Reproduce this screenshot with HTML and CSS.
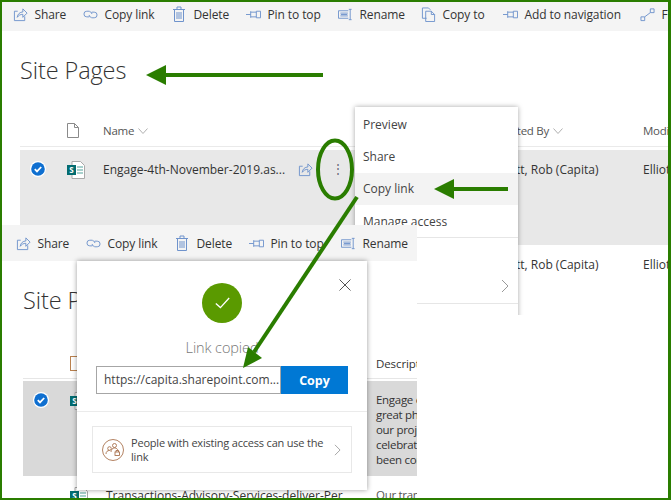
FILE: index.html
```html
<!DOCTYPE html>
<html lang="en">
<head>
<meta charset="utf-8">
<title>Site Pages - Copy link</title>
<link rel="stylesheet" href="styles.css">
</head>
<body>
<svg class="defs" width="0" height="0" aria-hidden="true">
  <symbol id="i-share" viewBox="0 0 16 16"><path d="M5 4.5H1.5v10h11V10M4.5 11c.3-3.4 3-5.700 6-5.700V2L15 6.500 10.500 11V7.800c-2.500 0-4.500 1-6 3.200z"/></symbol>
  <symbol id="i-link" viewBox="0 0 16 16"><path d="M7 4.500H4a3 3 0 0 0 0 6h2.500M7 5a2.500 2.500 0 0 1 2.500 2.500M9 11.500h3a3 3 0 0 0 0-6H9.500M9 11A2.500 2.500 0 0 1 6.500 8.500"/></symbol>
  <symbol id="i-trash" viewBox="0 0 12 16"><path d="M1.500 3.500v12h9v-12M0 3.500h12M4 3.500V1h4v2.500M4 6v7M6 6v7M8 6v7"/></symbol>
  <symbol id="i-pin" viewBox="0 0 16 16"><path d="M0 8h5M5 4.500v7M5 5.500h6M5 10.500h6M11 4.500v7M11 4.500h4.500v7H11"/></symbol>
  <symbol id="i-rename" viewBox="0 0 16 16"><path d="M11 4H.5v8H11M3 8h7M2.500 6.500h8M2.500 9.500h8M13 2.500v11M11.500 2.500h3M11.500 13.500h3"/></symbol>
  <symbol id="i-copy" viewBox="0 0 16 16"><path d="M6 12H1.500V1H8l2 2M5 4.500h6l3.500 3.500v7.500H5zM11 4.500V8h3.500"/></symbol>
  <symbol id="i-flow" viewBox="0 0 16 16"><path d="M1 10.500h4v4H1zM11 2h4v4h-4zM5 10.500L11 6"/></symbol>
  <symbol id="i-check" viewBox="0 0 16 16"><circle class="check-ring" cx="8" cy="8" r="8"/><circle class="check-disc" cx="8" cy="8" r="6.800"/><path class="check-tick" d="M4.800 8.200l2.200 2.200 4.200-4.400"/></symbol>
  <symbol id="i-page" viewBox="0 0 18 18"><path class="page-sheet" d="M5 .5h8.500l4 4v13H5z"/><path class="page-line" d="M10 6h6M10 9h6M10 12h6"/><rect class="page-tile" x="0" y="4" width="9" height="10"/><text class="page-s" x="4.500" y="12">S</text></symbol>
  <symbol id="i-file" viewBox="0 0 12 15"><path d="M.5.5h7l4 4v10H.5zM7.500.5v4h4"/></symbol>
  <symbol id="i-chevron" viewBox="0 0 10 6"><path d="M.5.500L5 5.500 9.500.500"/></symbol>
</svg>

<main class="canvas">
  <section class="shot shot-a">
    <div class="toolbar">
      <span class="tool"><svg class="ico"><use href="#i-share"/></svg>Share</span>
      <span class="tool"><svg class="ico"><use href="#i-link"/></svg>Copy link</span>
      <span class="tool"><svg class="ico ico-narrow"><use href="#i-trash"/></svg>Delete</span>
      <span class="tool"><svg class="ico"><use href="#i-pin"/></svg>Pin to top</span>
      <span class="tool"><svg class="ico"><use href="#i-rename"/></svg>Rename</span>
      <span class="tool"><svg class="ico"><use href="#i-copy"/></svg>Copy to</span>
      <span class="tool"><svg class="ico"><use href="#i-pin"/></svg>Add to navigation</span>
      <span class="tool"><svg class="ico"><use href="#i-flow"/></svg>Flow</span>
    </div>
    <h1 class="title">Site Pages</h1>
    <div class="grid-a head">
      <span></span>
      <svg class="file"><use href="#i-file"/></svg>
      <span class="col">Name <svg class="chev"><use href="#i-chevron"/></svg></span>
      <span class="col">Created By <svg class="chev"><use href="#i-chevron"/></svg></span>
      <span class="col">Modified By</span>
    </div>
    <div class="grid-a row row-selected">
      <svg class="check"><use href="#i-check"/></svg>
      <svg class="page"><use href="#i-page"/></svg>
      <span class="name-cell"><span class="name">Engage-4th-November-2019.as...</span><svg class="ico row-share"><use href="#i-share"/></svg><span class="dots">⋮</span></span>
      <span>Elliott, Rob (Capita)</span>
      <span>Elliott, Rob (Capita)</span>
    </div>
    <div class="grid-a row row-plain">
      <span></span><span></span><span></span>
      <span>Elliott, Rob (Capita)</span>
      <span>Elliott, Rob (Capita)</span>
    </div>
    <div class="menu">
      <div class="menu-item">Preview</div>
      <div class="menu-item">Share</div>
      <div class="menu-item menu-hover">Copy link</div>
      <div class="menu-item">Manage access</div>
      <div class="menu-gap"></div>
      <div class="menu-sub"><svg class="menu-chev" viewBox="0 0 8 14"><path d="M1 1l6 6-6 6"/></svg></div>
    </div>
  </section>

  <section class="shot shot-b">
    <div class="toolbar">
      <span class="tool"><svg class="ico"><use href="#i-share"/></svg>Share</span>
      <span class="tool"><svg class="ico"><use href="#i-link"/></svg>Copy link</span>
      <span class="tool"><svg class="ico ico-narrow"><use href="#i-trash"/></svg>Delete</span>
      <span class="tool"><svg class="ico"><use href="#i-pin"/></svg>Pin to top</span>
      <span class="tool"><svg class="ico"><use href="#i-rename"/></svg>Rename</span>
    </div>
    <h2 class="title title-b">Site Pages</h2>
    <div class="grid-b head-b">
      <span></span>
      <span class="file-b"></span>
      <span></span>
      <span class="col">Description</span>
    </div>
    <div class="grid-b row-b">
      <svg class="check"><use href="#i-check"/></svg>
      <svg class="page"><use href="#i-page"/></svg>
      <span></span>
      <span class="desc">Engage on our<br>great photos of<br>our projects to<br>celebrate what has<br>been completed</span>
    </div>
    <div class="grid-b row-b2">
      <span></span>
      <svg class="page"><use href="#i-page"/></svg>
      <span class="next-name">Transactions-Advisory-Services-deliver-Per</span>
      <span class="next-desc">Our transactions</span>
    </div>
  </section>

  <section class="dialog">
    <svg class="close" viewBox="0 0 12 12"><path d="M.5.500l11 11M11.500.500l-11 11"/></svg>
    <div class="ok"><svg class="ok-tick" viewBox="0 0 18 14"><path d="M1 7.500l5.500 5L17 1"/></svg></div>
    <p class="copied">Link copied</p>
    <div class="link-row">
      <span class="link-field">https://capita.sharepoint.com...</span>
      <button class="copy-btn" type="button">Copy</button>
    </div>
    <div class="dialog-sep"></div>
    <div class="access">
      <svg class="access-ico" viewBox="0 0 22 22">
        <circle cx="11" cy="11" r="10.500"/>
        <circle cx="7.500" cy="9.500" r="1.800"/><path d="M4 15c0-2.500 1.500-3.500 3.500-3.500"/>
        <circle cx="12.500" cy="6.500" r="2"/><path d="M9 13c0-2.500 1.500-4 3.500-4s3 1 3.500 2.500"/>
        <rect x="13" y="13" width="4.500" height="3.500"/><path d="M14 13v-1.500h2.500V13"/>
      </svg>
      <span class="access-text">People with existing access can use the link</span>
      <svg class="access-chev" viewBox="0 0 8 14"><path d="M1 1l6 6-6 6"/></svg>
    </div>
  </section>

  <svg class="marks" viewBox="0 0 671 500" aria-hidden="true">
    <path class="mark-line" d="M323 75H164"/>
    <polygon class="mark-head" points="146,75 166,65 166,85"/>
    <path class="mark-line" d="M508 189H452"/>
    <polygon class="mark-head" points="434,189 454,179 454,199"/>
    <ellipse class="mark-line" cx="335" cy="169.500" rx="17" ry="29"/>
    <path class="mark-line" d="M357 197L254 352"/>
    <polygon class="mark-head" points="243,368 248,347 262,358"/>
  </svg>
  <div class="edge"></div>
</main>
</body>
</html>
```
FILE: styles.css
```css
* { box-sizing: border-box; }
html, body { margin: 0; padding: 0; background: #fff; }
.defs { position: absolute; }
.canvas {
  position: relative;
  width: 671px;
  height: 500px;
  overflow: hidden;
  font-family: "Open Sans", "Noto Sans", sans-serif;
  font-size: 12px;
  color: #333;
  background: #fff;
}
.shot { position: absolute; overflow: hidden; background: #fff; }
.shot-a { left: 0; top: 0; width: 671px; height: 315px; }
.shot-b { left: 0; top: 225px; width: 417px; height: 275px; }

.toolbar {
  display: grid;
  grid-template-columns: 70px 90px 73px 92px 83px 82px 137px 60px;
  align-items: center;
  background: #f4f4f4;
  white-space: nowrap;
}
.shot-a .toolbar { height: 31px; padding: 0 0 3px 13px; }
.shot-b .toolbar { height: 36px; padding-left: 16px; }
.tool { display: flex; align-items: center; gap: 6.500px; letter-spacing: -.1px; }
.ico {
  width: 15px; height: 15px; flex: none;
  fill: none; stroke: #6f93cc; stroke-width: 1;
}
.ico-narrow { width: 12px; height: 16px; margin-right: 2px; }

.title {
  margin: 0;
  font-weight: 300;
  font-size: 23.500px;
  line-height: 30px;
  color: #333;
  letter-spacing: -.1px;
}
.shot-a .title { padding: 24px 0 0 20px; height: 84px; }
.shot-b .title-b { padding: 24px 0 0 23px; height: 84px; }

.grid-a {
  display: grid;
  grid-template-columns: 47px 36px 390px 150px 1fr;
  margin-left: 20px;
  white-space: nowrap;
}
.head { height: 32px; align-items: center; border-bottom: 1px solid #eaeaea; color: #555; font-size: 11.500px; letter-spacing: -.25px; }
.col { display: flex; align-items: center; gap: 4px; }
.chev { width: 10px; height: 6px; fill: none; stroke: #b0b0b0; }
.file { width: 12px; height: 15px; fill: none; stroke: #8a8a8a; }
.row { height: 95px; padding-top: 11px; margin-top: 3px; align-items: start; font-size: 12px; }
.row-selected { background: #e8e8e8; }
.row-plain { margin-top: 0; padding-top: 11px; }
.check { width: 16px; height: 16px; margin: 0 0 0 10px; }
.check-ring { fill: #fff; }
.check-disc { fill: #0f6fd0; }
.check-tick { fill: none; stroke: #fff; stroke-width: 1.800; }
.page { width: 18px; height: 18px; }
.page-sheet { fill: #fff; stroke: #a9a9a9; stroke-width: 1; }
.page-line { fill: none; stroke: #8cc2bd; stroke-width: 1.500; }
.page-tile { fill: #036c70; }
.page-s { fill: #fff; font-size: 8px; font-weight: 700; text-anchor: middle; }
.name-cell { display: flex; align-items: center; height: 16px; }
.name { width: 195px; }
.row-share { margin-right: 19px; }
.dots { font-size: 12px; color: #667; line-height: 16px; }

.menu {
  position: absolute;
  left: 355px; top: 107px;
  width: 163px; height: 230px;
  background: #fff;
  box-shadow: 0 0 5px rgba(0,0,0,.35);
  color: #444;
  padding-top: 1px;
}
.menu-item { height: 32.300px; display: flex; align-items: center; padding-left: 8px; }
.menu-hover { background: #f3f3f3; }
.menu-gap { height: 1px; margin-top: -.2px; background: #e6e6e6; }
.menu-sub {
  height: 66px;
  border-bottom: 1px solid #e6e6e6;
  display: flex; align-items: center; justify-content: flex-end;
  padding: 30px 9px 0 0;
}
.menu-chev { width: 8px; height: 14px; fill: none; stroke: #999; }

.grid-b {
  display: grid;
  grid-template-columns: 47px 36px 270px 1fr;
  margin-left: 23px;
  white-space: nowrap;
}
.head-b { height: 34px; padding-top: 3px; align-items: center; border-bottom: 1px solid #e6e6e6; font-size: 11.500px; letter-spacing: -.1px; }
.file-b { width: 12px; height: 15px; border: 1px solid #b9814f; }
.row-b { height: 95px; margin-top: 2px; padding-top: 11px; background: #d9d9d9; font-size: 12px; }
.desc { line-height: 15px; margin-top: 0; font-size: 11.500px; letter-spacing: -.3px; }
.row-b2 { padding-top: 11px; font-size: 12px; }
.next-name { margin-left: 0; }
.next-desc { font-size: 11.500px; letter-spacing: -.3px; color: #555; }

.dialog {
  position: absolute;
  left: 77px; top: 261px;
  width: 290px; height: 229px;
  background: #fff;
  box-shadow: 0 0 5px rgba(0,0,0,.4);
  display: flex; flex-direction: column; align-items: center;
  padding-top: 22px;
}
.close { position: absolute; right: 16px; top: 18px; width: 12px; height: 12px; fill: none; stroke: #555; }
.ok { width: 40px; height: 40px; border-radius: 50%; background: #5a9a00; display: flex; align-items: center; justify-content: center; }
.ok-tick { width: 15px; height: 12px; fill: none; stroke: #fff; stroke-width: 1.600; }
.copied { margin: 14px 0 0; font-size: 14.500px; line-height: 22px; font-weight: 300; color: #777; letter-spacing: -.1px; }
.link-row { display: flex; width: 252px; height: 28px; margin-top: 7px; }
.link-field { flex: 1; border: 1px solid #a6a6a6; padding: 0 7px; line-height: 26px; font-size: 12px; color: #444; white-space: nowrap; overflow: hidden; }
.copy-btn { width: 67px; border: 0; background: #0078d4; color: #fff; font: 700 12.500px "Open Sans", sans-serif; padding: 0; }
.dialog-sep { width: 100%; height: 1px; margin-top: 17px; background: #ebebeb; }
.access {
  display: flex; align-items: center;
  width: 260px; height: 47px; margin-top: 14px;
  border: 1px solid #e8e8e8;
  padding: 0 10px 0 9px;
}
.access-ico { width: 22px; height: 22px; flex: none; margin-right: 7px; fill: none; stroke: #a0623a; stroke-width: .8; }
.access-text { flex: 1; line-height: 14px; font-size: 11px; color: #444; letter-spacing: -.2px; padding-right: 8px; }
.access-chev { width: 7px; height: 12px; flex: none; fill: none; stroke: #999; }

.marks { position: absolute; left: 0; top: 0; width: 671px; height: 500px; pointer-events: none; }
.mark-line { fill: none; stroke: #2a7d00; stroke-width: 4; }
.mark-head { fill: #2a7d00; }
.edge { position: absolute; inset: 0; border: solid #2a7d00; border-width: 2px 3px 2px 2px; pointer-events: none; }
```
